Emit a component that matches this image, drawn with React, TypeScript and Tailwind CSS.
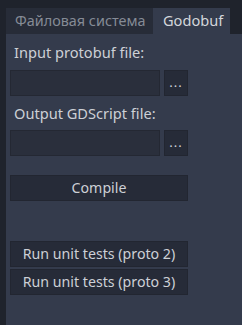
const font = { fontFamily: '"Noto Sans", "DejaVu Sans", sans-serif' };

function FileRow() {
    return (
        <div className="flex gap-1">
            <div className="h-[26px] w-[150px] border border-[#242833] bg-[#2a2f3c]" />
            <button
                type="button"
                className="flex h-[26px] w-[24px] items-center justify-center border border-[#222631] bg-[#262b38] pb-[2px] text-[13px] leading-none tracking-[1px] text-[#cfd2d8]"
            >
                ...
            </button>
        </div>
    );
}

function WideButton({ label }: { label: string }) {
    return (
        <button
            type="button"
            className="h-[26px] w-[178px] border border-[#222631] bg-[#262b38] text-[14.2px] leading-none text-[#cdd0d6]"
        >
            {label}
        </button>
    );
}

export default function App() {
    return (
        <div className="h-[325px] w-[242px] overflow-hidden bg-[#1f232c] pl-[6px] pt-[8px]" style={font}>
            <div className="flex h-[26px]">
                <div className="flex w-[147px] items-center bg-[#272c38] pl-[9px] text-[14.4px] text-[#858b96]">
                    Файловая система
                </div>
                <div className="flex w-[77px] items-center bg-[#343b4c] pl-[10px] text-[14.6px] text-[#d3d6db]">
                    Godobuf
                </div>
            </div>
            <div className="flex h-[291px] flex-col bg-[#343b4c] px-[4px] pt-[8px] text-[14.6px] text-[#cdd0d6]">
                <div className="h-[20px] pl-[4px] leading-[20px]">Input protobuf file:</div>
                <div className="mt-[8px]">
                    <FileRow />
                </div>
                <div className="mt-[7px] h-[20px] pl-[4px] leading-[20px]">Output GDScript file:</div>
                <div className="mt-[7px]">
                    <FileRow />
                </div>
                <div className="mt-[19px]">
                    <WideButton label="Compile" />
                </div>
                <div className="mt-[40px] flex flex-col gap-[2px]">
                    <WideButton label="Run unit tests (proto 2)" />
                    <WideButton label="Run unit tests (proto 3)" />
                </div>
            </div>
        </div>
    );
}
